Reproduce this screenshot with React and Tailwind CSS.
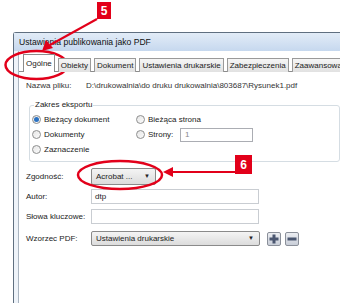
import React from 'react';

const RED = '#e2001a';

function Radio({ checked }) {
  return (
    <span className="w-[9px] h-[9px] rounded-full border border-[#8e8f8f] bg-gradient-to-br from-[#e6e6e6] to-[#fbfbfb] flex items-center justify-center shrink-0">
      {checked && <span className="w-[5px] h-[5px] rounded-full bg-[#2b72c2]" />}
    </span>
  );
}

function RadioItem({ checked, label }) {
  return (
    <div className="flex items-center gap-[3px] h-[15px]">
      <Radio checked={checked} />
      <span>{label}</span>
    </div>
  );
}

function Select({ label, width }) {
  return (
    <div
      className={`${width} h-full border border-[#8a8a8a] rounded-[2px] bg-gradient-to-b from-[#f4f4f4] to-[#dcdcdc] flex items-center justify-between pl-[4px] pr-[5px]`}
    >
      <span>{label}</span>
      <span className="text-[6px] text-[#222]">▼</span>
    </div>
  );
}

function IconButton({ minus }) {
  return (
    <div className="w-[14px] h-[14px] border border-[#8a8f99] rounded-[2px] bg-gradient-to-b from-[#eceef2] to-[#c9ced8] flex items-center justify-center">
      <svg width="10" height="10" viewBox="0 0 10 10">
        <rect x="0.5" y="3.5" width="9" height="3" fill="#4a5670" />
        {!minus && <rect x="3.5" y="0.5" width="3" height="9" fill="#4a5670" />}
      </svg>
    </div>
  );
}

const tabs = ['Obiekty', 'Dokument', 'Ustawienia drukarskie', 'Zabezpieczenia', 'Zaawansowane'];

export default function App() {
  return (
    <div className="relative w-[340px] h-[303px] overflow-hidden bg-white pt-[32px] pl-[13px] font-['Liberation_Sans',Arial,sans-serif] text-[8px] text-[#222]">
      {/* window */}
      <div className="h-full flex flex-col border-l border-t border-[#5f6f80] rounded-tl-[3px]">
        <div className="h-[18px] bg-gradient-to-b from-[#e2ecf7] to-[#c6d8ee] flex items-center pl-[5px] text-[8.6px] text-[#111] shrink-0">
          Ustawienia publikowania jako PDF
        </div>
        <div className="flex-1 flex">
          <div className="w-[5px] bg-[#eef3f9] border-r border-[#a9b4c0] shrink-0" />
          <div className="flex-1 flex flex-col bg-white pt-[3px] min-w-0">
            {/* tabs */}
            <div className="flex items-end gap-[3px] pl-[4px] h-[18px] -mb-px relative z-10 overflow-hidden">
              <div className="h-[18px] px-[2px] bg-white border-l border-t border-r border-[#8c8c8c] flex items-center shrink-0">
                Ogólne
              </div>
              {tabs.map((t) => (
                <div
                  key={t}
                  className="h-[14px] px-[2px] border border-b-0 border-[#9a9a9a] bg-gradient-to-b from-[#f6f6f6] to-[#e1e1e1] flex items-center whitespace-nowrap shrink-0"
                >
                  {t}
                </div>
              ))}
            </div>
            {/* pane */}
            <div className="flex-1 border-t border-[#8c8c8c] pl-[7px] pt-[8px]">
              <div className="flex items-center h-[12px] text-[#333]">
                <span className="w-[60px] shrink-0">Nazwa pliku:</span>
                <span className="whitespace-nowrap">D:\drukowalnia\do druku drukowalnia\803687\Rysunek1.pdf</span>
              </div>

              <fieldset className="mt-[8px] ml-[3px] border border-[#d5dde3] rounded-[3px] pl-[2px] pb-[4px]">
                <legend className="ml-[2px] px-[1px] h-[10px] leading-[10px]">Zakres eksportu</legend>
                <div className="flex pt-[2px]">
                  <div className="w-[104px] shrink-0">
                    <RadioItem checked label="Bieżący dokument" />
                    <RadioItem label="Dokumenty" />
                    <RadioItem label="Zaznaczenie" />
                  </div>
                  <div>
                    <RadioItem label="Bieżąca strona" />
                    <div className="flex items-center h-[15px]">
                      <Radio />
                      <span className="ml-[3px] w-[32px]">Strony:</span>
                      <div className="w-[73px] h-[14px] border border-[#abadb3] flex items-center pl-[4px] text-[#8a8a8a]">
                        1
                      </div>
                    </div>
                  </div>
                </div>
              </fieldset>

              <div className="flex items-center h-[17px] mt-[6px]">
                <span className="w-[65px] shrink-0">Zgodność:</span>
                <Select label="Acrobat ..." width="w-[65px]" />
              </div>
              <div className="flex items-center h-[15px] mt-[4px]">
                <span className="w-[65px] shrink-0">Autor:</span>
                <div className="w-[168px] h-full border border-[#c9cdd2] flex items-center pl-[3px]">dtp</div>
              </div>
              <div className="flex items-center h-[15px] mt-[5px]">
                <span className="w-[65px] shrink-0">Słowa kluczowe:</span>
                <div className="w-[168px] h-full border border-[#c9cdd2]" />
              </div>
              <div className="flex items-center h-[15px] mt-[7px]">
                <span className="w-[65px] shrink-0">Wzorzec PDF:</span>
                <Select label="Ustawienia drukarskie" width="w-[169px]" />
                <div className="flex gap-[4px] ml-[7px]">
                  <IconButton />
                  <IconButton minus />
                </div>
              </div>
            </div>
          </div>
        </div>
      </div>

      {/* annotations */}
      <svg className="absolute left-0 top-0 pointer-events-none" width="340" height="303" viewBox="0 0 340 303">
        <line x1="97" y1="19" x2="50" y2="45" stroke={RED} strokeWidth="2" />
        <polygon points="42,51 46,40 53,48" fill={RED} />
        <ellipse cx="36.5" cy="65" rx="31" ry="14" fill="none" stroke={RED} strokeWidth="2.5" />
        <ellipse cx="120" cy="175" rx="42" ry="14" fill="none" stroke={RED} strokeWidth="2.5" />
        <line x1="236" y1="172" x2="172" y2="172" stroke={RED} strokeWidth="2" />
        <polygon points="163,172 173,167 173,177" fill={RED} />
      </svg>
      <div className="absolute left-[97px] top-[2px] w-[14px] h-[17px] bg-[#e2001a] text-white font-bold text-[12px] flex items-center justify-center">
        5
      </div>
      <div className="absolute left-[235px] top-[155px] w-[17px] h-[19px] bg-[#e2001a] text-white font-bold text-[12px] flex items-center justify-center">
        6
      </div>
    </div>
  );
}
